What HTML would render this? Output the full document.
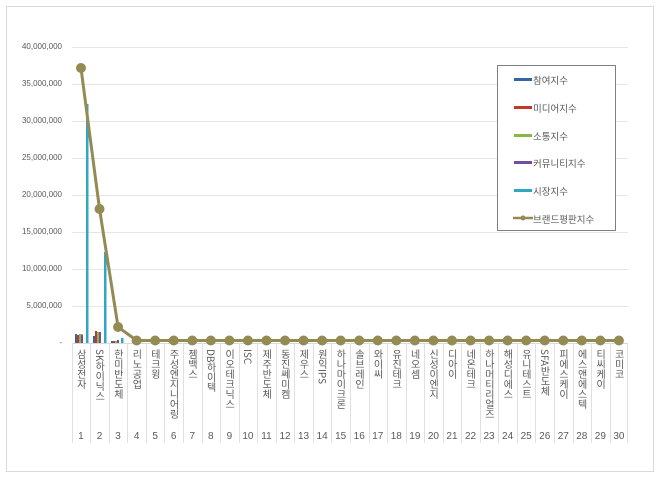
<!DOCTYPE html>
<html><head><meta charset="utf-8"><style>
body{margin:0;width:660px;height:480px;background:#fff;overflow:hidden;position:relative;font-family:"Liberation Sans","Noto Sans CJK KR",sans-serif}
.lab{position:absolute;top:349px;width:18px;writing-mode:vertical-rl;text-orientation:mixed;font-size:10px;line-height:18px;color:#595959;font-family:"Noto Sans CJK KR","NanumGothic",sans-serif}
.num{position:absolute;top:431px;width:18.55px;text-align:center;font-size:10px;color:#595959}
.yl{position:absolute;right:598px;font-size:8px;color:#595959}
.lg{position:absolute;left:533px;font-size:9.5px;color:#595959;font-family:"Noto Sans CJK KR",sans-serif}
</style></head><body>
<svg width="660" height="480" style="position:absolute;left:0;top:0">
<rect x="6.5" y="6.5" width="647" height="465" fill="#fff" stroke="#d9d9d9"/>
<g stroke="#e6e6e6" stroke-width="1">
<line x1="72" y1="47.5" x2="628" y2="47.5"/><line x1="72" y1="84.5" x2="628" y2="84.5"/>
<line x1="72" y1="121.5" x2="628" y2="121.5"/><line x1="72" y1="158.5" x2="628" y2="158.5"/>
<line x1="72" y1="195.5" x2="628" y2="195.5"/><line x1="72" y1="232.5" x2="628" y2="232.5"/>
<line x1="72" y1="269.5" x2="628" y2="269.5"/><line x1="72" y1="306.5" x2="628" y2="306.5"/>
</g>
<line x1="72" y1="343.5" x2="628" y2="343.5" stroke="#d9d9d9"/>
<g id="sep" stroke="#e0e0e0"></g>
<rect x="75" y="334" width="2" height="9" fill="#3465a4"/>
<rect x="77" y="335" width="2" height="8" fill="#c0392b"/>
<rect x="79" y="334" width="2" height="9" fill="#8db545"/>
<rect x="81" y="334.5" width="2" height="8.5" fill="#6f4f9e"/>
<rect x="86" y="104" width="2.5" height="239" fill="#31a7c4"/>
<rect x="93" y="336" width="2" height="7" fill="#3465a4"/>
<rect x="95" y="331" width="2" height="12" fill="#c0392b"/>
<rect x="97" y="332" width="2" height="11" fill="#8db545"/>
<rect x="99" y="332" width="2" height="11" fill="#6f4f9e"/>
<rect x="104" y="252" width="2.5" height="91" fill="#31a7c4"/>
<rect x="111" y="341" width="2" height="2" fill="#3465a4"/>
<rect x="113" y="341" width="2" height="2" fill="#c0392b"/>
<rect x="115" y="341" width="2" height="2" fill="#8db545"/>
<rect x="117" y="340" width="2" height="3" fill="#6f4f9e"/>
<rect x="121" y="338" width="2.5" height="5" fill="#31a7c4"/>
<g id="line"></g>
<rect x="497.5" y="65.5" width="118" height="165" fill="#fff" stroke="#7f7f7f"/>
<rect x="514" y="78" width="18" height="3" fill="#3465a4"/>
<rect x="514" y="106" width="18" height="3" fill="#c0392b"/>
<rect x="514" y="134" width="18" height="3" fill="#8db545"/>
<rect x="514" y="161" width="18" height="3" fill="#6f4f9e"/>
<rect x="514" y="189" width="18" height="3" fill="#31a7c4"/>
<line x1="513" y1="218" x2="533" y2="218" stroke="#948a54" stroke-width="2.5"/>
<circle cx="523" cy="218" r="2.5" fill="#948a54"/>
</svg>
<div class="yl" style="top:42px">40,000,000</div>
<div class="yl" style="top:79px">35,000,000</div>
<div class="yl" style="top:116px">30,000,000</div>
<div class="yl" style="top:153px">25,000,000</div>
<div class="yl" style="top:190px">20,000,000</div>
<div class="yl" style="top:227px">15,000,000</div>
<div class="yl" style="top:264px">10,000,000</div>
<div class="yl" style="top:301px">5,000,000</div>
<div class="yl" style="top:338px">-</div>
<div class="lg" style="top:73px">참여지수</div>
<div class="lg" style="top:101px">미디어지수</div>
<div class="lg" style="top:129px">소통지수</div>
<div class="lg" style="top:156px">커뮤니티지수</div>
<div class="lg" style="top:184px">시장지수</div>
<div class="lg" style="top:212px">브랜드평판지수</div>
<div id="labs"></div>
<script>
var names=["삼성전자","SK하이닉스","한미반도체","리노공업","테크윙","주성엔지니어링","젬백스","DB하이텍","이오테크닉스","ISC","제주반도체","동진쎄미켐","제우스","원익IPS","하나마이크론","솔브레인","와이씨","유진테크","네오셈","신성이엔지","디아이","네온테크","하나머티리얼즈","해성디에스","유니테스트","SFA반도체","피에스케이","에스앤에스텍","티씨케이","코미코"];
var w=18.55,x0=71.7,h="",sep="",pts=[];
for(var i=0;i<30;i++){var x=x0+i*w;
h+='<div class="lab" style="left:'+(x+0.5)+'px">'+names[i]+'</div><div class="num" style="left:'+x+'px">'+(i+1)+'</div>';
sep+='<line x1="'+(Math.round(x)+0.5)+'" y1="343" x2="'+(Math.round(x)+0.5)+'" y2="443"/>';
var y=i==0?68:i==1?209:i==2?327:340.5;pts.push([x+w/2,y]);}
sep+='<line x1="627.5" y1="343" x2="627.5" y2="443"/>';
document.getElementById('labs').innerHTML=h;
document.getElementById('sep').innerHTML=sep;
var l='<polyline fill="none" stroke="#948a54" stroke-width="3" points="'+pts.map(p=>p.join(',')).join(' ')+'"/>';
pts.forEach(p=>{l+='<circle cx="'+p[0]+'" cy="'+p[1]+'" r="5" fill="#948a54"/>'});
document.getElementById('line').innerHTML=l;
</script>
</body></html>
